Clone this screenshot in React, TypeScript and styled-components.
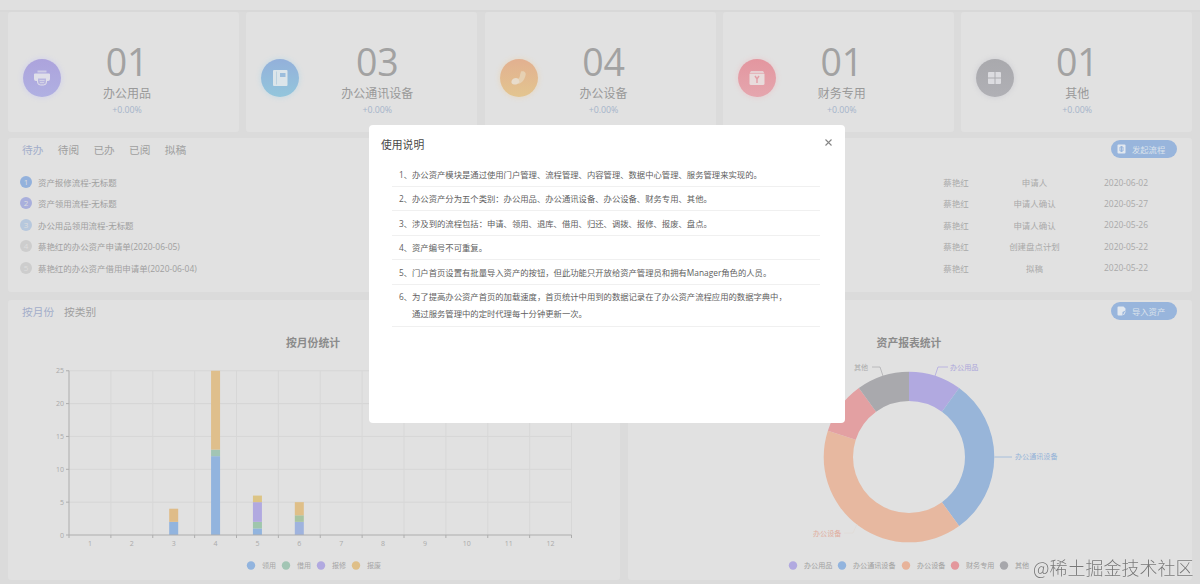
import React from "react";
import styled, { createGlobalStyle } from "styled-components";

const GlobalStyle = createGlobalStyle`
  * { box-sizing: border-box; }
  html, body { margin: 0; padding: 0; }
  body {
    width: 1200px;
    height: 584px;
    overflow: hidden;
    background: #dbdbdb;
    font-family: "Open Sans", "Noto Sans CJK SC", sans-serif;
    color: #9c9c9c;
  }
`;

const Page = styled.div`
  display: flex;
  flex-direction: column;
  width: 1200px;
  height: 584px;
  overflow: hidden;
`;

const TopStrip = styled.div`
  height: 12px;
  flex: none;
  background: #e0e0e0;
  border-bottom: 2px solid #d8d8d8;
`;

const Content = styled.main`
  display: flex;
  flex-direction: column;
  padding: 0 8px;
`;

const StatRow = styled.section`
  display: grid;
  grid-template-columns: repeat(5, 231px);
  justify-content: space-between;
  height: 120px;
  margin-bottom: 6px;
`;

const StatCard = styled.article`
  display: flex;
  align-items: flex-start;
  padding: 27px 0 0 15px;
  background: #e1e1e1;
  border-radius: 3px;
`;

const StatIcon = styled.div<{ $from: string; $to: string; $glow: string }>`
  display: flex;
  align-items: center;
  justify-content: center;
  width: 38px;
  height: 38px;
  margin-top: 20px;
  border-radius: 50%;
  background: linear-gradient(${(p) => p.$from}, ${(p) => p.$to});
  box-shadow: 0 0 5px 1px ${(p) => p.$glow};
`;

const StatText = styled.div`
  display: flex;
  flex-direction: column;
  align-items: center;
  margin-left: 42px;
`;

const StatNumber = styled.div`
  font-size: 37.5px;
  line-height: 46px;
  font-weight: 400;
  letter-spacing: -0.3px;
  color: #a2a2a2;
`;

const StatLabel = styled.div`
  font-size: 12px;
  line-height: 18px;
  color: #999;
`;

const StatDelta = styled.div`
  font-size: 8.8px;
  line-height: 14px;
  color: #a5b4ca;
`;

const Panel = styled.section<{ $h: number; $w?: number }>`
  width: ${(p) => (p.$w ? `${p.$w}px` : "auto")};
  height: ${(p) => p.$h}px;
  background: #e1e1e1;
  border-radius: 3px;
`;

const PanelHead = styled.header`
  display: flex;
  align-items: center;
  justify-content: space-between;
  height: 22px;
  padding: 0 15px 0 14px;
`;

const Tabs = styled.nav<{ $gap: number }>`
  display: flex;
  gap: ${(p) => p.$gap}px;
  padding-top: 1px;
`;

const Tab = styled.span<{ $active?: boolean }>`
  font-size: 10.7px;
  line-height: 16px;
  color: ${(p) => (p.$active ? "#a3aeca" : "#9f9f9f")};
`;

const ActionButton = styled.button`
  display: flex;
  align-items: center;
  gap: 6px;
  width: 66px;
  height: 18px;
  margin: 0 0 0 auto;
  padding: 0 0 1px 6px;
  border: 0;
  border-radius: 9px;
  background: #98b5dc;
  color: #dbe3ec;
  font: inherit;
  font-size: 8.3px;
`;

const TaskList = styled.ul`
  list-style: none;
  margin: 11.4px 0 0;
  padding: 0;
`;

const TaskRow = styled.li`
  display: grid;
  grid-template-columns: 12px 1fr 60px 97px 86px;
  align-items: center;
  height: 21.4px;
  padding: 0 23px 0 12px;
  font-size: 8.45px;
  color: #9f9f9f;
`;

const Badge = styled.span<{ $c: string }>`
  width: 12px;
  height: 12px;
  border-radius: 50%;
  background: ${(p) => p.$c};
  color: #dedede;
  font-size: 8px;
  line-height: 12px;
  text-align: center;
`;

const TaskTitle = styled.span`
  padding-left: 6px;
`;

const TaskCell = styled.span`
  text-align: center;
  color: #a9a9a9;
`;

const ChartRow = styled.section`
  display: flex;
  justify-content: space-between;
  margin-top: 8px;
`;

const Mask = styled.div`
  position: fixed;
  inset: 0 auto auto 0;
  width: 1200px;
  height: 584px;
  padding: 125px 0 0 369px;
`;

const Dialog = styled.div`
  width: 476px;
  height: 298px;
  border-radius: 4px;
  background: #fff;
`;

const DialogHead = styled.header`
  display: flex;
  align-items: flex-start;
  justify-content: space-between;
  height: 37.4px;
  padding: 11px 12px 0 12px;
  font-size: 10.8px;
  line-height: 18px;
  color: #484848;
`;

const CloseIcon = styled.svg`
  width: 9px;
  height: 9px;
  margin-top: 2px;
`;

const Notes = styled.ol`
  list-style: none;
  margin: 0 25px 0 23px;
  padding: 0;
`;

const Note = styled.li`
  display: flex;
  padding: 3.2px 0 3.3px 7px;
  border-bottom: 1px solid #f0f0f0;
  font-size: 8.34px;
  line-height: 17px;
  color: #606060;
  white-space: nowrap;

  &:last-child {
    padding-bottom: 4.2px;
  }
`;

const NoteIndex = styled.span`
  width: 13px;
  flex: none;
`;

const Watermark = styled.div`
  position: fixed;
  left: 1033px;
  top: 554px;
  font-family: "Noto Sans CJK SC", sans-serif;
  font-size: 18px;
  line-height: 27px;
  font-weight: 300;
  white-space: nowrap;
  color: #777;
  text-shadow: 0 0 1px #f5f5f5;
`;

const PrinterIcon = () => (
  <svg width="18" height="18" viewBox="0 0 18 18">
    <path d="M4.5 1.5h9v2h-9z" fill="#cfcde6" />
    <path d="M2 4.5h14a1 1 0 0 1 1 1v4.5a2 2 0 0 1-2 2H3a2 2 0 0 1-2-2V5.500a1 1 0 0 1 1-1z" fill="#e0dfe9" />
    <path d="M4.500 9h9v4a3 3 0 0 1-3 3h-3a3 3 0 0 1-3-3z" fill="#b9b6e0" stroke="#e0dfe9" strokeWidth="1" />
    <path d="M6.500 11.500h5M7 13.500h4" stroke="#d2d1e6" />
  </svg>
);

const BookIcon = () => (
  <svg width="18" height="18" viewBox="0 0 18 18">
    <path d="M3 1h12.500a1 1 0 0 1 1 1v14a1 1 0 0 1-1 1H3a1 1 0 0 1-1-1V2a1 1 0 0 1 1-1z" fill="#dce5ea" />
    <path d="M5.500 2.500v13" stroke="#bdd2e0" strokeWidth="1" />
    <path d="M9 4h5.500v4H9z" fill="#9bbddc" />
  </svg>
);

const PhoneIcon = () => (
  <svg width="18" height="18" viewBox="0 0 18 18">
    <path d="M11 2.500c3-1 5.500 1 4.500 4-1 4-3.500 7.500-7 8.500l-2.500-4c3-1 4-3 4-5z" fill="#e6d0b2" />
    <path d="M1.500 12c1-3 5-4 7-2l1 3c-2 3-6 3.500-8 1z" fill="#e8dccb" />
  </svg>
);

const MoneyIcon = () => (
  <svg width="18" height="18" viewBox="0 0 18 18">
    <path d="M3 2h12l1.500 2.500h-15z" fill="#e6cfd2" />
    <path d="M1.500 5h15v9.500a1.500 1.500 0 0 1-1.500 1.500H3a1.500 1.500 0 0 1-1.500-1.500z" fill="#e8dcdc" />
    <path d="M7 7l2 3 2-3M9 10v4" stroke="#e3a0a8" strokeWidth="1.500" fill="none" />
  </svg>
);

const GridIcon = () => (
  <svg width="18" height="18" viewBox="0 0 18 18">
    <path d="M3 3h5.500v5.500H2V4a1 1 0 0 1 1-1zM9.500 3H14a1 1 0 0 1 1 1v4.500H9.500zM2 9.500h6.500V15H3a1 1 0 0 1-1-1zM9.500 9.500H15V14a1 1 0 0 1-1 1H9.500z" fill="#dcdce0" />
  </svg>
);

const FlowIcon = () => (
  <svg width="9" height="10" viewBox="0 0 9 10">
    <rect x="0.500" y="0.500" width="8" height="9" rx="1" fill="#e2e8ef" />
    <path d="M3 3h3v4H3zM4.500 2v6" stroke="#98b5dc" fill="none" />
  </svg>
);

const ImportIcon = () => (
  <svg width="9" height="10" viewBox="0 0 9 10">
    <path d="M1.500.500h5l2 2v2L5.500 6v3.500h-4a1 1 0 0 1-1-1v-7a1 1 0 0 1 1-1z" fill="#e2e8ef" />
    <path d="M6.500 9L8.300 5.500" stroke="#e2e8ef" />
  </svg>
);

const stats = [
  { n: "01", label: "办公用品", from: "#aca3dc", to: "#b0b0e2", glow: "#d3d3ea", icon: <PrinterIcon /> },
  { n: "03", label: "办公通讯设备", from: "#93b0da", to: "#93c6dc", glow: "#c9dbe4", icon: <BookIcon /> },
  { n: "04", label: "办公设备", from: "#e2b090", to: "#e3c58f", glow: "#e6d9c6", icon: <PhoneIcon /> },
  { n: "01", label: "财务专用", from: "#e3969f", to: "#e5a6ae", glow: "#e6d0d2", icon: <MoneyIcon /> },
  { n: "01", label: "其他", from: "#a9a9ad", to: "#b0b0b5", glow: "#d2d2d6", icon: <GridIcon /> },
];

const tasks = [
  { c: "#93b1dc", title: "资产报修流程-无标题", who: "蔡艳红", step: "申请人", date: "2020-06-02" },
  { c: "#a9afdc", title: "资产领用流程-无标题", who: "蔡艳红", step: "申请人确认", date: "2020-05-27" },
  { c: "#b7c8dd", title: "办公用品领用流程-无标题", who: "蔡艳红", step: "申请人确认", date: "2020-05-26" },
  { c: "#cdcdcd", title: "蔡艳红的办公资产申请单(2020-06-05)", who: "蔡艳红", step: "创建盘点计划", date: "2020-05-22" },
  { c: "#cdcdcd", title: "蔡艳红的办公资产借用申请单(2020-06-04)", who: "蔡艳红", step: "拟稿", date: "2020-05-22" },
];

const notes: string[][] = [
  ["办公资产模块是通过使用门户管理、流程管理、内容管理、数据中心管理、服务管理来实现的。"],
  ["办公资产分为五个类别：办公用品、办公通讯设备、办公设备、财务专用、其他。"],
  ["涉及到的流程包括：申请、领用、退库、借用、归还、调拨、报修、报废、盘点。"],
  ["资产编号不可重复。"],
  ["门户首页设置有批量导入资产的按钮，但此功能只开放给资产管理员和拥有Manager角色的人员。"],
  ["为了提高办公资产首页的加载速度，首页统计中用到的数据记录在了办公资产流程应用的数据字典中，", "通过服务管理中的定时代理每十分钟更新一次。"],
];

const BLUE = "#92b4de";
const GREEN = "#a2c5b4";
const PURPLE = "#b1a9e0";
const AMBER = "#dfbf88";

const bars: { month: number; parts: [number, string][] }[] = [
  { month: 3, parts: [[2, BLUE], [2, "#dfbc88"]] },
  { month: 4, parts: [[12, BLUE], [1, GREEN], [12, "#dfbf8c"]] },
  { month: 5, parts: [[1, BLUE], [1, "#9fc6ac"], [3, PURPLE], [1, "#dcc485"]] },
  { month: 6, parts: [[2, "#9fb3de"], [1, "#a8c4a2"], [2, AMBER]] },
];

/* Plot area of the monthly chart, in panel coordinates. */
const X0 = 61;
const X1 = 563.500;
const Y0 = 213.500;
const STEP = (X1 - X0) / 12;
const UNIT = 6.570;

const MonthChart = () => (
  <svg width="612" height="258" viewBox="0 22 612 258" fontSize="7">
    <text x="305" y="46.800" fontSize="10.8" fontWeight="700" fill="#8b8b8b" textAnchor="middle">按月份统计</text>
    <g transform="translate(0 21.500)">
      {[0, 5, 10, 15, 20, 25].map((v) => {
        const y = Y0 - v * UNIT;
        return (
          <g key={v}>
            {v > 0 && <line x1={X0} x2={X1} y1={y} y2={y} stroke="#d6d6d6" />}
            <line x1={X0 - 3} x2={X0} y1={y} y2={y} stroke="#adadad" />
            <text x={X0 - 5} y={y + 2.500} textAnchor="end" fill="#aaa">{v}</text>
          </g>
        );
      })}
      {Array.from({ length: 13 }, (_, i) => (
        <g key={i}>
          {i > 0 && <line x1={X0 + i * STEP} x2={X0 + i * STEP} y1={Y0 - 25 * UNIT} y2={Y0} stroke="#d7d7d7" />}
          <line x1={X0 + i * STEP} x2={X0 + i * STEP} y1={Y0} y2={Y0 + 3} stroke="#adadad" />
          {i < 12 && <text x={X0 + (i + 0.500) * STEP} y={Y0 + 10.500} textAnchor="middle" fill="#aaa">{i + 1}</text>}
        </g>
      ))}
      {bars.map((b) => {
        let sum = 0;
        return b.parts.map(([v, c], i) => {
          sum += v;
          return <rect key={`${b.month}-${i}`} x={X0 + (b.month - 0.500) * STEP - 4.500} width="9" y={Y0 - sum * UNIT} height={v * UNIT} fill={c} />;
        });
      })}
      <line x1={X0} x2={X1} y1={Y0} y2={Y0} stroke="#adadad" />
      <line x1={X0} x2={X0} y1={Y0 - 25 * UNIT} y2={Y0} stroke="#adadad" />
    </g>
    {[["领用", BLUE], ["借用", GREEN], ["报修", PURPLE], ["报废", AMBER]].map(([t, c], i) => (
      <g key={t}>
        <circle cx={243 + i * 35} cy="265.500" r="4.200" fill={c} />
        <text x={254 + i * 35} y="268" fill="#a5a5a5">{t}</text>
      </g>
    ))}
  </svg>
);

const slices: [number, string][] = [
  [1, "#b1a9e0"],
  [3, "#98b5d9"],
  [4, "#e7b8a0"],
  [1, "#e3a0a2"],
  [1, "#a9a9ad"],
];

const CX = 281;
const CY = 157;

const ring = (a: number, b: number) => {
  const p = (r: number, t: number) =>
    `${CX + r * Math.sin(t * Math.PI * 0.200)} ${CY - r * Math.cos(t * Math.PI * 0.200)}`;
  return `M${p(85.300, a)}A85.300 85.300 0 0 1 ${p(85.300, b)}L${p(56, b)}A56 56 0 0 0 ${p(56, a)}Z`;
};

const ReportChart = () => {
  let acc = 0;
  return (
    <svg width="564" height="258" viewBox="0 22 564 258" fontSize="7.100">
      <text x="281" y="46.800" fontSize="10.800" fontWeight="700" fill="#8b8b8b" textAnchor="middle">资产报表统计</text>
      {slices.map(([v, c], i) => {
        const start = acc;
        acc += v;
        return <path key={i} d={ring(start, acc)} fill={c} />;
      })}
      <g fill="none" strokeWidth="0.800">
        <path d="M307 76l3-9h10" stroke="#b1a9e0" />
        <path d="M366.500 157H384" stroke="#98b5d9" />
        <path d="M255 76l-3-9h-8" stroke="#b0b0b3" />
        <path d="M229 224l-4 9h-9" stroke="#e0dad7" />
      </g>
      <text x="322" y="69.500" fill="#aca5da">办公用品</text>
      <text x="387" y="159" fill="#94b2d8">办公通讯设备</text>
      <text x="226" y="69.500" fill="#aaa">其他</text>
      <text x="185" y="235.500" fill="#e0ada0">办公设备</text>
      {([[165, "办公用品", PURPLE], [214, "办公通讯设备", BLUE], [278, "办公设备", "#e7b39a"], [327, "财务专用", "#e3979c"], [376, "其他", "#a7a7ab"]] as [number, string, string][]).map(([x, t, c]) => (
        <g key={t}>
          <circle cx={x} cy="265.500" r="4.200" fill={c} />
          <text x={x + 11} y="268" fill="#a0a0a0">{t}</text>
        </g>
      ))}
    </svg>
  );
};

export default function App() {
  return (
    <>
      <GlobalStyle />
      <Page>
        <TopStrip />
        <Content>
          <StatRow>
            {stats.map((s) => (
              <StatCard key={s.label}>
                <StatIcon $from={s.from} $to={s.to} $glow={s.glow}>{s.icon}</StatIcon>
                <StatText>
                  <StatNumber>{s.n}</StatNumber>
                  <StatLabel>{s.label}</StatLabel>
                  <StatDelta>+0.00%</StatDelta>
                </StatText>
              </StatCard>
            ))}
          </StatRow>
          <Panel $h={154}>
            <PanelHead>
              <Tabs $gap={14.300}>
                {["待办", "待阅", "已办", "已阅", "拟稿"].map((t, i) => (
                  <Tab key={t} $active={i === 0}>{t}</Tab>
                ))}
              </Tabs>
              <ActionButton><FlowIcon />发起流程</ActionButton>
            </PanelHead>
            <TaskList>
              {tasks.map((t, i) => (
                <TaskRow key={t.title}>
                  <Badge $c={t.c}>{i + 1}</Badge>
                  <TaskTitle>{t.title}</TaskTitle>
                  <TaskCell>{t.who}</TaskCell>
                  <TaskCell>{t.step}</TaskCell>
                  <TaskCell>{t.date}</TaskCell>
                </TaskRow>
              ))}
            </TaskList>
          </Panel>
          <ChartRow>
            <Panel $h={280} $w={612}>
              <PanelHead>
                <Tabs $gap={10}>
                  <Tab $active>按月份</Tab>
                  <Tab>按类别</Tab>
                </Tabs>
              </PanelHead>
              <MonthChart />
            </Panel>
            <Panel $h={280} $w={564}>
              <PanelHead>
                <ActionButton><ImportIcon />导入资产</ActionButton>
              </PanelHead>
              <ReportChart />
            </Panel>
          </ChartRow>
        </Content>
      </Page>
      <Mask>
        <Dialog>
          <DialogHead>
            使用说明
            <CloseIcon viewBox="0 0 9 9">
              <path d="M1.500 1.500l6 6M7.500 1.500l-6 6" stroke="#858585" strokeWidth="1.100" />
            </CloseIcon>
          </DialogHead>
          <Notes>
            {notes.map((lines, i) => (
              <Note key={i}>
                <NoteIndex>{i + 1}、</NoteIndex>
                <div>
                  {lines.map((l) => (
                    <div key={l}>{l}</div>
                  ))}
                </div>
              </Note>
            ))}
          </Notes>
        </Dialog>
      </Mask>
      <Watermark>@稀土掘金技术社区</Watermark>
    </>
  );
}
